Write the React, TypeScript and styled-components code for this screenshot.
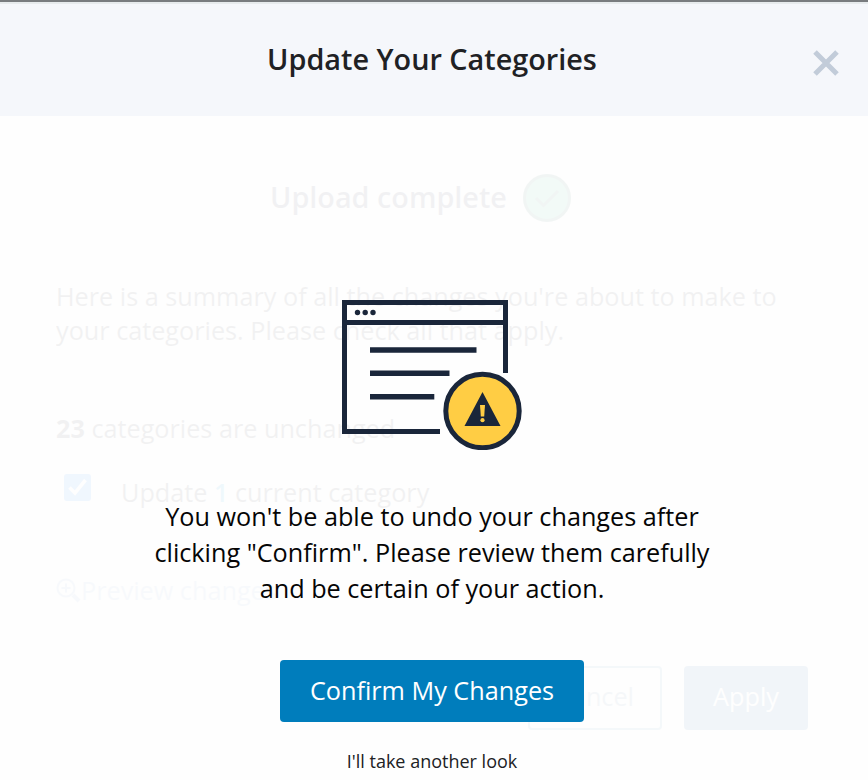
import React from "react";
import styled, { createGlobalStyle } from "styled-components";

const GlobalStyle = createGlobalStyle`
  * { box-sizing: border-box; }
  body {
    margin: 0;
    background: #fff;
    font-family: "Open Sans", sans-serif;
    color: #202124;
  }
  button { font-family: inherit; cursor: pointer; }
`;

const Dialog = styled.main`
  width: 868px;
  height: 780px;
  overflow: hidden;
  border-top: 2px solid #797c7f;
  background: #fefefe;
`;

const Header = styled.header`
  height: 114px;
  display: grid;
  grid-template-columns: 84px 1fr 84px;
  align-items: center;
  border-top: 2px solid #e7ebed;
  background: #f5f7fb;
`;

const Title = styled.h1`
  grid-column: 2;
  margin: 0;
  padding: 0 4px 2px 0;
  font-size: 28.8px;
  line-height: 40px;
  font-weight: 600;
  text-align: center;
  white-space: nowrap;
`;

const CloseButton = styled.button`
  justify-self: center;
  display: flex;
  padding: 5px 0 0;
  border: 0;
  background: none;
`;

const Body = styled.div`
  position: relative;
  height: 664px;
`;

const Summary = styled.section`
  height: 100%;
  padding: 58px 60px 0 56px;
  opacity: 0.055;
  color: #303136;
  font-size: 25.22px;
`;

const Status = styled.div`
  display: flex;
  align-items: center;
  gap: 16px;
  height: 48px;
  padding-left: 214px;
`;

const StatusText = styled.h2`
  width: 237px;
  margin: 0;
  padding-bottom: 2px;
  font-size: 28.8px;
  font-weight: 600;
  line-height: 40px;
  white-space: nowrap;
  color: #30314d;
`;

const Intro = styled.p`
  margin: 57px 0 0;
  line-height: 34px;
  white-space: nowrap;
`;

const Unchanged = styled.p`
  margin: 64px 0 0;
  line-height: 34px;
`;

const CheckRow = styled.label`
  display: flex;
  align-items: center;
  gap: 30px;
  height: 34px;
  margin-top: 30px;
  padding-left: 8px;
`;

const CheckBox = styled.span`
  display: flex;
  width: 27px;
  height: 27px;
  margin-bottom: 9px;
  border-radius: 3px;
  background: #1689ff;
`;

const Count = styled.b`
  font-weight: 600;
  color: #00a0e8;
`;

const Preview = styled.div`
  display: flex;
  align-items: center;
  height: 34px;
  margin-top: 64px;
  color: #94b4e0;
`;

const Actions = styled.div`
  display: flex;
  justify-content: flex-end;
  gap: 22px;
  margin-top: 59px;
`;

const ActionButton = styled.button<{ $filled?: boolean }>`
  width: ${({ $filled }) => ($filled ? "124px" : "134px")};
  height: 64px;
  padding: 0 0 4px;
  border: 2px solid ${({ $filled }) => ($filled ? "#2f6fb0" : "#5c9cc8")};
  border-radius: 4px;
  background: ${({ $filled }) => ($filled ? "#2f6fb0" : "#fff")};
  color: ${({ $filled }) => ($filled ? "#fff" : "#6c8fae")};
  font-size: 25.22px;
`;

const Confirmation = styled.section`
  position: absolute;
  inset: 0;
  display: flex;
  flex-direction: column;
  align-items: center;
  padding: 184px 4px 0 0;
`;

const Message = styled.p`
  margin: 48px 0 0;
  font-size: 25.22px;
  line-height: 36px;
  text-align: center;
  white-space: nowrap;
  color: #050505;
`;

const ConfirmButton = styled.button`
  flex: none;
  width: 304px;
  height: 62px;
  margin-top: 54px;
  padding: 0 0 2px;
  border: 0;
  border-radius: 4px;
  background: #007dbc;
  color: #fff;
  font-size: 25.22px;
`;

const DismissButton = styled.button`
  flex: none;
  margin-top: 26px;
  padding: 0;
  border: 0;
  background: none;
  color: #202124;
  font-size: 18px;
  line-height: 26px;
`;

const WarningArt = styled.svg`
  flex: none;
`;

function WindowWarning() {
  return (
    <WarningArt width="180" height="150" viewBox="342 300 180 150" fill="none">
      <path d="M440 431.5H344.5V302.5H505.5V373M344.5 322.5H505.5" stroke="#1a263a" strokeWidth="5" />
      <path d="M370 350H476.5M370 373.3H449.5M370 396.7H434.3" stroke="#1a263a" strokeWidth="5.4" />
      <g fill="#1a263a">
        <circle cx="357.5" cy="312.5" r="2.7" />
        <circle cx="365.2" cy="312.5" r="2.7" />
        <circle cx="373" cy="312.5" r="2.7" />
      </g>
      <circle cx="482.5" cy="411" r="36.7" fill="#ffcd44" stroke="#1a263a" strokeWidth="5" />
      <path d="M482.5 392L500.5 426H464.5Z" fill="#1a263a" />
      <path d="M480 405H485L484.2 416.5H480.8Z" fill="#ffcd44" />
      <circle cx="482.5" cy="420.2" r="2.1" fill="#ffcd44" />
    </WarningArt>
  );
}

export default function App() {
  return (
    <>
      <GlobalStyle />
      <Dialog>
        <Header>
          <Title>Update Your Categories</Title>
          <CloseButton aria-label="Close">
            <svg width="26" height="26" viewBox="0 0 26 26">
              <path d="M2 2L24 24M24 2L2 24" stroke="#c2ccd9" strokeWidth="5" />
            </svg>
          </CloseButton>
        </Header>
        <Body>
          <Summary>
            <Status>
              <StatusText>Upload complete</StatusText>
              <svg width="48" height="48" viewBox="0 0 48 48" fill="none">
                <circle cx="24" cy="24" r="22.5" fill="#34bd90" stroke="#30705f" strokeWidth="3" />
                <path d="M13 24L20.5 31.5L35 17" stroke="#30705f" strokeWidth="3" />
              </svg>
            </Status>
            <Intro>
              Here is a summary of all the changes you're about to make to
              <br />
              your categories. Please check all that apply.
            </Intro>
            <Unchanged><b>23</b> categories are unchanged</Unchanged>
            <CheckRow>
              <CheckBox>
                <svg width="27" height="27" viewBox="0 0 27 27" fill="none">
                  <path d="M5.5 13.5L11 19L21.5 6" stroke="#fff" strokeWidth="3.6" />
                </svg>
              </CheckBox>
              <span>Update <Count>1</Count> current category</span>
            </CheckRow>
            <Preview>
              <svg width="25" height="25" viewBox="0 0 25 25" fill="none" stroke="currentColor" strokeWidth="2">
                <circle cx="10" cy="10" r="8.5" />
                <path d="M10 5.5V14.5M5.5 10H14.5" />
                <path d="M17 17L23 23" strokeWidth="4" />
              </svg>
              <span>Preview changes</span>
            </Preview>
            <Actions>
              <ActionButton>Cancel</ActionButton>
              <ActionButton $filled>Apply</ActionButton>
            </Actions>
          </Summary>
          <Confirmation>
            <WindowWarning />
            <Message>
              You won't be able to undo your changes after
              <br />
              clicking "Confirm". Please review them carefully
              <br />
              and be certain of your action.
            </Message>
            <ConfirmButton>Confirm My Changes</ConfirmButton>
            <DismissButton>I'll take another look</DismissButton>
          </Confirmation>
        </Body>
      </Dialog>
    </>
  );
}
